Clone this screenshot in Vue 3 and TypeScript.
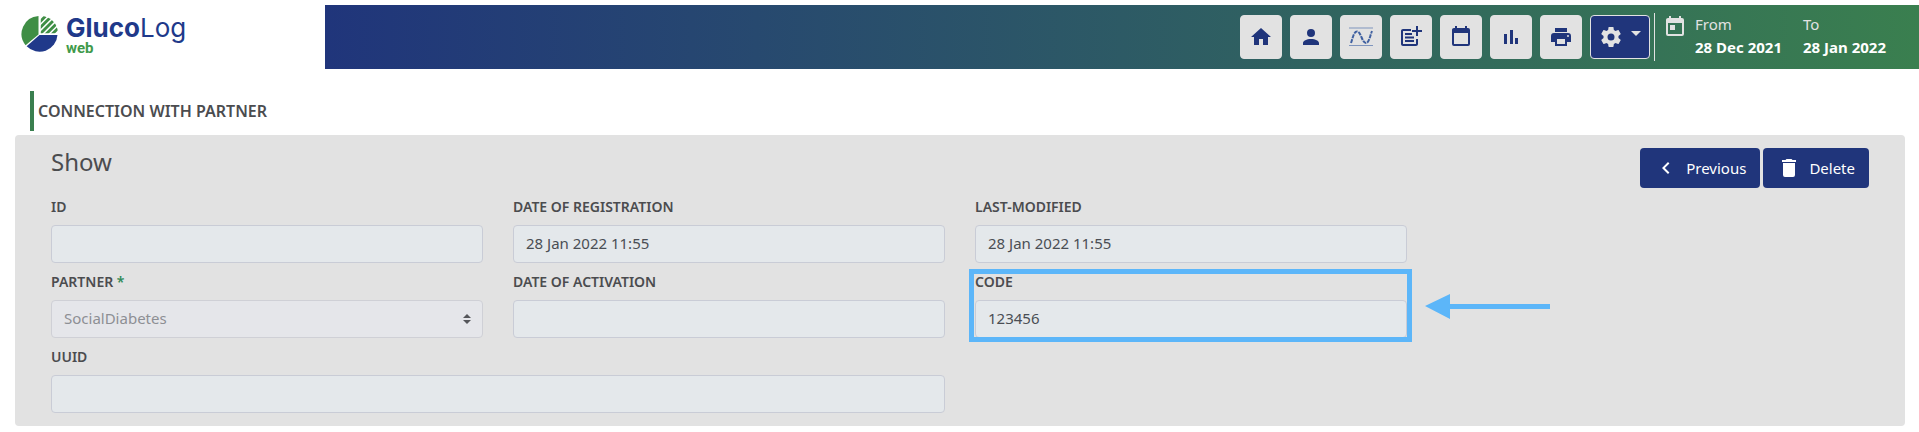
<script setup lang="ts">
interface NavItem {
  label: string
  path?: string
}

const navItems: NavItem[] = [
  { label: 'Home', path: 'M10 20V14H14V20H19V12H22L12 3L2 12H5V20H10Z' },
  { label: 'Profile', path: 'M12 4A4 4 0 1 1 12 12A4 4 0 1 1 12 4M12 14C16.42 14 20 15.79 20 18V20H4V18C4 15.79 7.58 14 12 14Z' },
  { label: 'Daily curve' },
  { label: 'Add entry', path: 'M17 14H19V19C19 20.1 18.1 21 17 21H4C2.9 21 2 20.1 2 19V6C2 4.9 2.9 4 4 4H12V6H4V19H17ZM6 8H13V10H6ZM6 11.5H15V13.5H6ZM6 15H15V17H6ZM17 1H19V5H23V7H19V11H17V7H13V5H17Z' },
  { label: 'Calendar', path: 'M19 19H5V8H19M19 3H18V1H16V3H8V1H6V3H5C3.89 3 3 3.9 3 5V19A2 2 0 0 0 5 21H19A2 2 0 0 0 21 19V5A2 2 0 0 0 19 3Z' },
  { label: 'Statistics', path: 'M5 9H8V19H5ZM11 5H14V19H11ZM16 13H19V19H16Z' },
  { label: 'Print', path: 'M18 3H6V7H18M19 12A1 1 0 0 1 18 11A1 1 0 0 1 19 10A1 1 0 0 1 20 11A1 1 0 0 1 19 12M16 19H8V14H16M19 8H5A3 3 0 0 0 2 11V17H6V21H18V17H22V11A3 3 0 0 0 19 8Z' },
]

const range = [
  { label: 'From', date: '28 Dec 2021' },
  { label: 'To', date: '28 Jan 2022' },
]

interface Field {
  id: string
  label: string
  value: string
  select?: boolean
  wide?: boolean
  highlight?: boolean
  first?: boolean
}

const fields: Field[] = [
  { id: 'record-id', label: 'ID', value: '', first: true },
  { id: 'registered', label: 'DATE OF REGISTRATION', value: '28 Jan 2022 11:55' },
  { id: 'modified', label: 'LAST-MODIFIED', value: '28 Jan 2022 11:55' },
  { id: 'partner', label: 'PARTNER', value: 'SocialDiabetes', select: true, first: true },
  { id: 'activated', label: 'DATE OF ACTIVATION', value: '' },
  { id: 'code', label: 'CODE', value: '123456', highlight: true },
  { id: 'uuid', label: 'UUID', value: '', wide: true, first: true },
]
</script>

<template>
  <div class="page">
    <header class="header">
      <a class="brand" href="#">
        <svg class="brand-mark" viewBox="0 0 36 36" aria-hidden="true">
          <defs><clipPath id="quarter"><path d="M19 17V0A17 17 0 0 1 36 17Z" /></clipPath></defs>
          <path d="M17 0V18L4.500 28.500A17.500 17.500 0 0 1 17 0Z" fill="#3f8e45" />
          <path d="M18 18.500H35.500A17.500 17.500 0 0 1 5.500 29.500Z" fill="#20398a" />
          <g clip-path="url(#quarter)" stroke="#3f8e45" stroke-width="2.800">
            <path d="M16 8L26 -2M16 14L32 -2M16 20L38 -2M16 26L40 2M16 32L40 8" />
          </g>
        </svg>
        <span class="brand-text">
          <span class="brand-name"><b>Gluco</b>Log</span>
          <span class="brand-sub">web</span>
        </span>
      </a>
      <div class="bar">
        <nav class="nav" aria-label="Main">
          <button v-for="item in navItems" :key="item.label" class="nav-button" type="button" :aria-label="item.label">
            <svg v-if="item.path" class="icon" viewBox="0 0 24 24"><path :d="item.path" /></svg>
            <svg v-else class="icon curve" viewBox="0 0 24 24">
              <path class="limit" d="M0 3H24M0 20.500H24" />
              <path class="wave" d="M2 18C4 12 5 6.500 8 6.500C12 6.500 13 18 17 18C20 18 21 11 23 6" />
            </svg>
          </button>
          <button class="nav-button settings" type="button" aria-label="Settings">
            <svg class="icon" viewBox="0 0 24 24">
              <path d="M12 15.500A3.500 3.500 0 0 1 8.500 12A3.500 3.500 0 0 1 12 8.500A3.500 3.500 0 0 1 15.500 12A3.500 3.500 0 0 1 12 15.500M19.430 12.970C19.470 12.650 19.500 12.330 19.500 12C19.500 11.670 19.470 11.340 19.430 11L21.540 9.370C21.730 9.220 21.780 8.950 21.660 8.730L19.660 5.270C19.540 5.050 19.270 4.960 19.050 5.050L16.560 6.050C16.040 5.660 15.500 5.320 14.870 5.070L14.500 2.420C14.460 2.180 14.250 2 14 2H10C9.750 2 9.540 2.180 9.500 2.420L9.130 5.070C8.500 5.320 7.960 5.660 7.440 6.050L4.950 5.050C4.730 4.960 4.460 5.050 4.340 5.270L2.340 8.730C2.210 8.950 2.270 9.220 2.460 9.370L4.570 11C4.530 11.340 4.500 11.670 4.500 12C4.500 12.330 4.530 12.650 4.570 12.970L2.460 14.630C2.270 14.780 2.210 15.050 2.340 15.270L4.340 18.730C4.460 18.950 4.730 19.030 4.950 18.950L7.440 17.940C7.960 18.340 8.500 18.680 9.130 18.930L9.500 21.580C9.540 21.820 9.750 22 10 22H14C14.250 22 14.460 21.820 14.500 21.580L14.870 18.930C15.500 18.670 16.040 18.340 16.560 17.940L19.050 18.950C19.270 19.030 19.540 18.950 19.660 18.730L21.660 15.270C21.780 15.050 21.730 14.780 21.540 14.630L19.430 12.970Z" />
            </svg>
            <span class="caret"></span>
          </button>
        </nav>
        <div class="range">
          <svg class="icon" viewBox="0 0 24 24" aria-hidden="true">
            <path d="M7 10H12V15H7M19 19H5V8H19M19 3H18V1H16V3H8V1H6V3H5C3.890 3 3 3.900 3 5V19A2 2 0 0 0 5 21H19A2 2 0 0 0 21 19V5A2 2 0 0 0 19 3Z" />
          </svg>
          <div v-for="entry in range" :key="entry.label" class="range-entry">
            <span class="range-label">{{ entry.label }}</span>
            <strong>{{ entry.date }}</strong>
          </div>
        </div>
      </div>
    </header>

    <main class="main">
      <h1 class="title">CONNECTION WITH PARTNER</h1>
      <section class="card">
        <div class="card-head">
          <h2>Show</h2>
          <div class="actions">
            <button type="button" class="action">
              <svg class="icon" viewBox="0 0 24 24"><path d="M15.410 16.580L10.830 12L15.410 7.410L14 6L8 12L14 18Z" /></svg>
              Previous
            </button>
            <button type="button" class="action">
              <svg class="icon" viewBox="0 0 24 24"><path d="M19 4H15.500L14.500 3H9.500L8.500 4H5V6H19M6 19A2 2 0 0 0 8 21H16A2 2 0 0 0 18 19V7H6Z" /></svg>
              Delete
            </button>
          </div>
        </div>
        <form class="fields">
          <div v-for="field in fields" :key="field.id" class="field" :class="{ wide: field.wide, first: field.first }">
            <label :for="field.id">{{ field.label }}<span v-if="field.select" class="required"> *</span></label>
            <div v-if="field.select" class="select-wrap">
              <select :id="field.id" disabled><option>{{ field.value }}</option></select>
              <svg class="sort" viewBox="0 0 8 10" aria-hidden="true"><path d="M4 0L8 4H0ZM4 10L8 6H0Z" /></svg>
            </div>
            <input v-else :id="field.id" type="text" :value="field.value" readonly />
            <template v-if="field.highlight">
              <span class="highlight"></span>
              <svg class="arrow" viewBox="0 0 125 25" aria-hidden="true"><path d="M0 12L25 0V10H125V15H25V25Z" /></svg>
            </template>
          </div>
        </form>
      </section>
    </main>
  </div>
</template>

<style>
body {
  background: #fff;
}
</style>

<style scoped>
.page,
.page * {
  box-sizing: border-box;
}
.page {
  padding-top: 5px;
  color: #4b4c4f;
  font: 15px/24px "Noto Sans", "Open Sans", sans-serif;
}
button,
input,
select {
  font: inherit;
}
.icon {
  width: 24px;
  height: 24px;
  fill: currentColor;
}
.header {
  display: flex;
  height: 64px;
}
.brand {
  display: flex;
  flex: 0 0 325px;
  gap: 8px;
  padding: 11px 0 0 21px;
  color: #20398a;
  text-decoration: none;
}
.brand-mark {
  width: 37px;
  height: 37px;
}
.brand-text {
  display: flex;
  flex-direction: column;
}
.brand-name {
  font: 26px/24px Inter, sans-serif;
}
.brand-sub {
  color: #3f9a4a;
  font: bold 15px/16px Roboto, sans-serif;
}
.bar {
  display: flex;
  flex: 1;
  justify-content: flex-end;
  padding: 8px 32px 8px 0;
  background: linear-gradient(90deg, #20357b, #3a7f4f);
}
.nav {
  display: flex;
  gap: 8px;
  padding: 2px 4px 2px 0;
  border-right: 1px solid #e2e2e2;
}
.nav-button {
  display: flex;
  align-items: center;
  justify-content: center;
  width: 42px;
  height: 44px;
  padding: 0;
  border: 1px solid #e2e2e2;
  border-radius: 4px;
  background: #e2e2e2;
  color: #20357b;
}
.curve {
  fill: none;
}
.limit {
  stroke: #7f95bd;
  stroke-width: 1;
}
.wave {
  stroke: #3f60a0;
  stroke-width: 2;
  stroke-dasharray: 4 1;
}
.settings {
  gap: 8px;
  width: 60px;
  background: #20357b;
  color: #e2e2e2;
}
.caret {
  margin-bottom: 8px;
  border: solid transparent;
  border-width: 5px 5px 0;
  border-top-color: currentColor;
}
.range {
  display: flex;
  padding-left: 8px;
  color: #e2e2e2;
}
.range > .icon {
  margin: 2px 8px 0 0;
}
.range-entry {
  display: flex;
  flex-direction: column;
  width: 108px;
  line-height: 23px;
}
.range-entry:last-child {
  width: 84px;
}
.range strong {
  color: #fff;
  white-space: nowrap;
}
.main {
  padding: 22px 14px 6px 15px;
}
.title {
  margin: 0 0 4px 15px;
  padding-left: 4px;
  border-left: 4px solid #3a7f4f;
  font-size: 16px;
  font-weight: 600;
  line-height: 40px;
}
.card {
  padding: 13px 36px 13px;
  border-radius: 4px;
  background: #e2e2e2;
}
.card-head {
  display: flex;
  justify-content: space-between;
  height: 47px;
}
h2 {
  margin: 0;
  font-size: 24px;
  font-weight: 400;
  line-height: 28px;
}
.actions {
  display: flex;
  gap: 3px;
}
.action {
  display: flex;
  align-items: center;
  gap: 8px;
  height: 40px;
  padding: 0 14px;
  border: 0;
  border-radius: 4px;
  background: #20357b;
  color: #fff;
}
.fields {
  display: grid;
  grid-template-columns: repeat(4, 1fr);
  gap: 7px 30px;
}
.first {
  grid-column-start: 1;
}
.wide {
  grid-column-end: span 2;
}
.field {
  position: relative;
}
label {
  display: block;
  height: 30px;
  font-size: 14px;
  font-weight: 600;
  line-height: 24px;
}
.required {
  color: #2f8a57;
}
input,
select {
  display: block;
  width: 100%;
  height: 38px;
  padding: 0 12px 2px;
  border: 1px solid #c9ccd6;
  border-radius: 4px;
  outline: 0;
  background: #e4e8eb;
  color: #4a4e54;
}
select {
  appearance: none;
  border-color: #cfd0d6;
  background: #e5e6ea;
  color: #8d8f94;
  opacity: 1;
}
.select-wrap {
  position: relative;
}
.sort {
  position: absolute;
  top: 14px;
  right: 12px;
  width: 8px;
  height: 10px;
  fill: #55565a;
}
.highlight {
  position: absolute;
  inset: -1px -5px -4px -6px;
  border: 5px solid #5cb6f9;
}
.arrow {
  position: absolute;
  top: 24px;
  left: calc(100% + 18px);
  width: 125px;
  height: 25px;
  fill: #5cb6f9;
}
</style>
